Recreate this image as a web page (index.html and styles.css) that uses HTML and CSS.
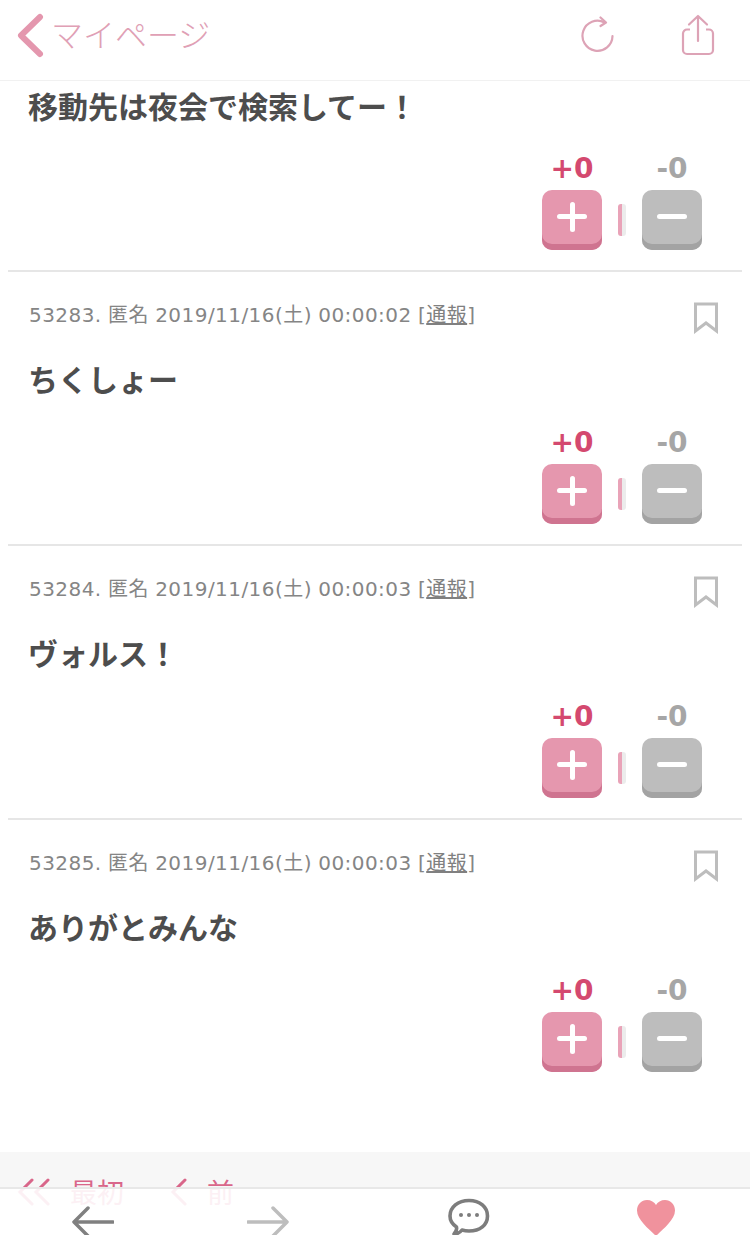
FILE: index.html
```html
<!DOCTYPE html>
<html lang="ja">
<head>
<meta charset="utf-8">
<title>マイページ</title>
<link rel="stylesheet" href="styles.css">
</head>
<body>
<div class="page">
  <header class="topbar">
    <a class="back">
      <svg class="back-icon" width="30" height="46" viewBox="0 0 30 46"><path d="M26 5 L7 23.500 L26 42" fill="none" stroke="#e497ae" stroke-width="6" stroke-linecap="round" stroke-linejoin="round"/></svg>
      <span class="back-label">マイページ</span>
    </a>
    <div class="top-actions">
      <svg class="reload" width="36" height="38" viewBox="0 0 36 38"><path d="M24.500 6.500 A15 15 0 1 0 32.500 20" fill="none" stroke="#dda3b6" stroke-width="2.200" stroke-linecap="round"/><path d="M20.500 1.500 L26 6.500 L20.500 10" fill="none" stroke="#dda3b6" stroke-width="2.200" stroke-linecap="round" stroke-linejoin="round"/></svg>
      <svg class="share" width="34" height="42" viewBox="0 0 34 42"><path d="M9 15.500 H6 A4 4 0 0 0 2 19.500 V36 A4 4 0 0 0 6 40 H28 A4 4 0 0 0 32 36 V19.500 A4 4 0 0 0 28 15.500 H25" fill="none" stroke="#dda3b6" stroke-width="2.200"/><path d="M17 2 V27 M8 10.500 L17 2 L26 10.500" fill="none" stroke="#dda3b6" stroke-width="2.200" stroke-linecap="round" stroke-linejoin="round"/></svg>
    </div>
  </header>

  <main class="comments">
    <article class="comment comment-first">
      <p class="body">移動先は夜会で検索してー！</p>
      <div class="votes">
        <div class="vote"><span class="count count-plus">+0</span><button class="btn btn-plus"><span class="bar"></span><span class="bar bar-v"></span></button></div>
        <span class="sep"></span>
        <div class="vote"><span class="count count-minus">-0</span><button class="btn btn-minus"><span class="bar"></span></button></div>
      </div>
    </article>
    <article class="comment">
      <div class="meta"><span>53283. 匿名 2019/11/16(土) 00:00:02 [<u>通報</u>]</span><svg class="bookmark" width="26" height="32" viewBox="0 0 26 32"><path d="M2.500 2 H23.500 V29 L13 21 L2.500 29 Z" fill="none" stroke="#bdbdbd" stroke-width="3"/></svg></div>
      <p class="body">ちくしょー</p>
      <div class="votes">
        <div class="vote"><span class="count count-plus">+0</span><button class="btn btn-plus"><span class="bar"></span><span class="bar bar-v"></span></button></div>
        <span class="sep"></span>
        <div class="vote"><span class="count count-minus">-0</span><button class="btn btn-minus"><span class="bar"></span></button></div>
      </div>
    </article>
    <article class="comment">
      <div class="meta"><span>53284. 匿名 2019/11/16(土) 00:00:03 [<u>通報</u>]</span><svg class="bookmark" width="26" height="32" viewBox="0 0 26 32"><path d="M2.500 2 H23.500 V29 L13 21 L2.500 29 Z" fill="none" stroke="#bdbdbd" stroke-width="3"/></svg></div>
      <p class="body">ヴォルス！</p>
      <div class="votes">
        <div class="vote"><span class="count count-plus">+0</span><button class="btn btn-plus"><span class="bar"></span><span class="bar bar-v"></span></button></div>
        <span class="sep"></span>
        <div class="vote"><span class="count count-minus">-0</span><button class="btn btn-minus"><span class="bar"></span></button></div>
      </div>
    </article>
    <article class="comment comment-last">
      <div class="meta"><span>53285. 匿名 2019/11/16(土) 00:00:03 [<u>通報</u>]</span><svg class="bookmark" width="26" height="32" viewBox="0 0 26 32"><path d="M2.500 2 H23.500 V29 L13 21 L2.500 29 Z" fill="none" stroke="#bdbdbd" stroke-width="3"/></svg></div>
      <p class="body">ありがとみんな</p>
      <div class="votes">
        <div class="vote"><span class="count count-plus">+0</span><button class="btn btn-plus"><span class="bar"></span><span class="bar bar-v"></span></button></div>
        <span class="sep"></span>
        <div class="vote"><span class="count count-minus">-0</span><button class="btn btn-minus"><span class="bar"></span></button></div>
      </div>
    </article>
  </main>

  <nav class="pager">
    <a class="pager-link">
      <svg width="34" height="28" viewBox="0 0 34 28"><path d="M15 2 L3 14 L15 26 M31 2 L19 14 L31 26" fill="none" stroke="#d9668a" stroke-width="3" stroke-linecap="round"/></svg>
      <span>最初</span>
    </a>
    <a class="pager-link">
      <svg width="18" height="28" viewBox="0 0 18 28"><path d="M15 2 L3 14 L15 26" fill="none" stroke="#d9668a" stroke-width="3" stroke-linecap="round"/></svg>
      <span>前</span>
    </a>
  </nav>

  <footer class="tabbar">
    <svg class="tab tab-back" width="42" height="40" viewBox="0 0 42 40"><path d="M41 19 H3 M16 5 L2 19 L16 33" fill="none" stroke="#808080" stroke-width="3.500" stroke-linecap="round" stroke-linejoin="round"/></svg>
    <svg class="tab tab-forward" width="42" height="40" viewBox="0 0 42 40"><path d="M1 19 H39 M26 5 L40 19 L26 33" fill="none" stroke="#bdbdbd" stroke-width="3.500" stroke-linecap="round" stroke-linejoin="round"/></svg>
    <svg class="tab tab-chat" width="42" height="40" viewBox="0 0 42 40"><path d="M21 2.500 C32 2.500 39.500 9 39.500 18 C39.500 27 32 33 21 33 C18.500 33 16 32.600 14 32 C12 34.500 9 36 6 36 C8 34 9 31.500 8.500 29 C4 26 2 22.500 2 18 C2 9 10 2.500 21 2.500 Z" fill="none" stroke="#7d7d7d" stroke-width="3.600" stroke-linejoin="round"/><circle cx="13" cy="17" r="2" fill="#7d7d7d"/><circle cx="21" cy="17" r="2" fill="#7d7d7d"/><circle cx="29" cy="17" r="2" fill="#7d7d7d"/></svg>
    <svg class="tab tab-heart" width="40" height="40" viewBox="0 0 40 40"><path d="M20 37 C14 31 1 21 1 11.500 C1 5.500 5.500 1 11 1 C15 1 18.500 3 20 6 C21.500 3 25 1 29 1 C34.500 1 39 5.500 39 11.500 C39 21 26 31 20 37 Z" fill="#f0929d"/></svg>
  </footer>
</div>
</body>
</html>
```
FILE: styles.css
```css
* { box-sizing: border-box; }
html, body { margin: 0; padding: 0; background: #fff; }
body {
  font-family: "DejaVu Sans", "Noto Sans CJK JP", sans-serif;
  color: #4d4d4d;
}
.page {
  position: relative;
  width: 750px;
  height: 1235px;
  overflow: hidden;
  background: #fff;
}
.topbar {
  height: 81px;
  display: flex;
  justify-content: space-between;
  align-items: center;
  padding: 0 35px 10px 14px;
  border-bottom: 1px solid #f1f1f1;
}
.back { display: flex; align-items: center; gap: 7px; }
.back-label {
  font-family: "Noto Sans CJK JP", sans-serif;
  font-weight: 300;
  font-size: 32px;
  line-height: 40px;
  color: #e0a0b5;
  margin-top: -4px;
}
.top-actions { display: flex; align-items: center; gap: 65px; }
.share { margin-top: -1px; }
.comments { margin: 0 8px; }
.comment {
  height: 274px;
  padding: 0 40px 0 21px;
  border-bottom: 2px solid #e6e6e6;
}
.comment-first { height: 191px; padding-top: 1px; }
.comment-last { border-bottom: 0; }
.meta {
  height: 62px;
  padding-top: 26px;
  margin-right: -17px;
  display: flex;
  justify-content: space-between;
  align-items: flex-start;
  font-size: 20px;
  line-height: 34px;
  color: #858585;
  letter-spacing: 0.45px;
  word-spacing: -0.5px;
}
.meta u { color: #808080; }
.bookmark { margin-top: 4px; }
.body {
  margin: 21px 0 0 -1px;
  height: 46px;
  font-family: "Noto Sans CJK JP", sans-serif;
  font-weight: 700;
  font-size: 30px;
  line-height: 46px;
  color: #4d4d4d;
}
.comment-first .body { margin-top: 0; }
.votes {
  display: flex;
  justify-content: flex-end;
  align-items: flex-end;
  margin-top: 24px;
  gap: 16px;
}
.comment-first .votes { margin-top: 23px; }
.vote { display: flex; flex-direction: column; align-items: center; width: 60px; }
.count {
  font-weight: 700;
  font-size: 28px;
  line-height: 36px;
  height: 39px;
}
.count-plus { color: #d4496f; }
.count-minus { color: #a6a6a6; }
.btn {
  position: relative;
  display: block;
  width: 60px;
  height: 60px;
  padding: 0;
  border: 0;
  border-radius: 10px;
}
.btn-plus { background: #e597ae; box-shadow: inset 0 -6px 0 #cf7490; }
.btn-minus { background: #bdbdbd; box-shadow: inset 0 -6px 0 #a3a3a3; }
.bar {
  position: absolute;
  left: 15px;
  top: 24px;
  width: 30px;
  height: 5px;
  border-radius: 3px;
  background: #fff;
}
.bar-v { left: 27.500px; top: 11.500px; width: 5px; height: 30px; }
.sep {
  width: 8px;
  height: 32px;
  margin-bottom: 14px;
  border-radius: 3px;
  background: linear-gradient(to right, #e9a3b8 0 55%, #ececec 55% 100%);
}
.pager {
  position: absolute;
  left: 0;
  right: 0;
  top: 1152px;
  height: 83px;
  padding: 22px 0 0 17px;
  display: flex;
  align-items: flex-start;
  gap: 46px;
  background: #f7f7f7;
}
.pager-link { display: flex; align-items: center; gap: 19px; }
.pager-link span {
  font-family: "Noto Sans CJK JP", sans-serif;
  font-size: 27px;
  line-height: 36px;
  color: #d9668a;
}
.tabbar {
  position: absolute;
  left: 0;
  right: 0;
  top: 1187px;
  height: 48px;
  border-top: 2px solid #e8e8e8;
  background: rgba(255, 255, 255, 0.9);
}
.tab { position: absolute; top: 9px; }
.tab-back { left: 72px; top: 14px; }
.tab-forward { left: 247px; top: 14px; }
.tab-chat { left: 448px; }
.tab-heart { left: 636px; top: 10px; }
```
